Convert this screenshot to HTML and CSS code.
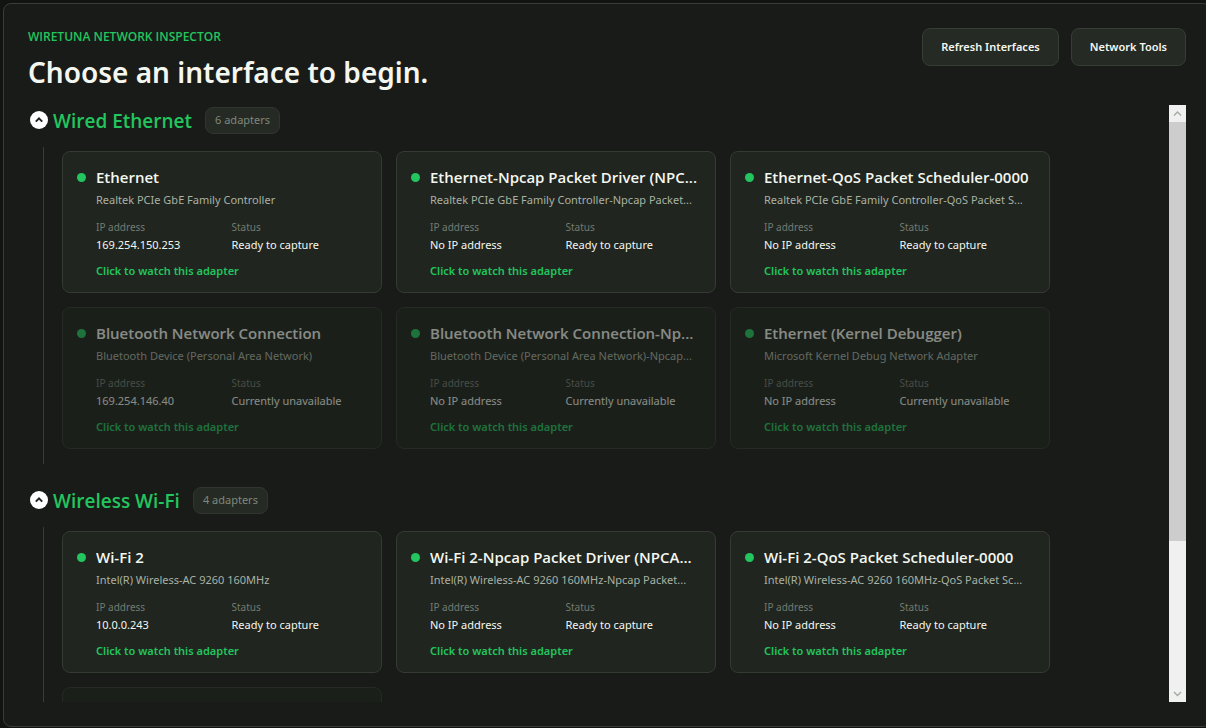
FILE: index.html
```html
<!DOCTYPE html>
<html lang="en">

<head>
    <meta charset="utf-8">
    <title>WireTuna</title>
    <link rel="stylesheet" href="styles.css">
</head>

<body>

    <main class="panel">

        <header class="top">
            <div>
                <p class="eyebrow">WIRETUNA NETWORK INSPECTOR</p>
                <h1>Choose an interface to begin.</h1>
            </div>
            <div class="actions">
                <button class="btn" type="button">Refresh Interfaces</button>
                <button class="btn" type="button">Network Tools</button>
            </div>
        </header>

        <div class="scroller">
            <div class="groups">

                <details class="group" open>
                    <summary>
                        <svg class="toggle" viewBox="0 0 18 18"><circle cx="9" cy="9" r="9" fill="#fff"/><path d="M5.8 10.6 9 7.4l3.2 3.2" fill="none" stroke="#222" stroke-width="2"/></svg>
                        <span class="group-name">Wired Ethernet</span>
                        <span class="badge">6 adapters</span>
                    </summary>
                    <div class="cards">
                        <button class="card" type="button">
                            <span class="dot"></span>
                            <span class="info">
                                <span class="name">Ethernet</span>
                                <span class="desc">Realtek PCIe GbE Family Controller</span>
                                <span class="facts">
                                    <span class="label">IP address</span><span class="label">Status</span>
                                    <span class="value">169.254.150.253</span><span class="value">Ready to capture</span>
                                </span>
                                <span class="watch">Click to watch this adapter</span>
                            </span>
                        </button>
                        <button class="card" type="button">
                            <span class="dot"></span>
                            <span class="info">
                                <span class="name">Ethernet-Npcap Packet Driver (NPC...</span>
                                <span class="desc">Realtek PCIe GbE Family Controller-Npcap Packet...</span>
                                <span class="facts">
                                    <span class="label">IP address</span><span class="label">Status</span>
                                    <span class="value">No IP address</span><span class="value">Ready to capture</span>
                                </span>
                                <span class="watch">Click to watch this adapter</span>
                            </span>
                        </button>
                        <button class="card" type="button">
                            <span class="dot"></span>
                            <span class="info">
                                <span class="name">Ethernet-QoS Packet Scheduler-0000</span>
                                <span class="desc">Realtek PCIe GbE Family Controller-QoS Packet S...</span>
                                <span class="facts">
                                    <span class="label">IP address</span><span class="label">Status</span>
                                    <span class="value">No IP address</span><span class="value">Ready to capture</span>
                                </span>
                                <span class="watch">Click to watch this adapter</span>
                            </span>
                        </button>
                        <button class="card" type="button" disabled>
                            <span class="dot"></span>
                            <span class="info">
                                <span class="name">Bluetooth Network Connection</span>
                                <span class="desc">Bluetooth Device (Personal Area Network)</span>
                                <span class="facts">
                                    <span class="label">IP address</span><span class="label">Status</span>
                                    <span class="value">169.254.146.40</span><span class="value">Currently unavailable</span>
                                </span>
                                <span class="watch">Click to watch this adapter</span>
                            </span>
                        </button>
                        <button class="card" type="button" disabled>
                            <span class="dot"></span>
                            <span class="info">
                                <span class="name">Bluetooth Network Connection-Np...</span>
                                <span class="desc">Bluetooth Device (Personal Area Network)-Npcap...</span>
                                <span class="facts">
                                    <span class="label">IP address</span><span class="label">Status</span>
                                    <span class="value">No IP address</span><span class="value">Currently unavailable</span>
                                </span>
                                <span class="watch">Click to watch this adapter</span>
                            </span>
                        </button>
                        <button class="card" type="button" disabled>
                            <span class="dot"></span>
                            <span class="info">
                                <span class="name">Ethernet (Kernel Debugger)</span>
                                <span class="desc">Microsoft Kernel Debug Network Adapter</span>
                                <span class="facts">
                                    <span class="label">IP address</span><span class="label">Status</span>
                                    <span class="value">No IP address</span><span class="value">Currently unavailable</span>
                                </span>
                                <span class="watch">Click to watch this adapter</span>
                            </span>
                        </button>
                    </div>
                </details>

                <details class="group" open>
                    <summary>
                        <svg class="toggle" viewBox="0 0 18 18"><circle cx="9" cy="9" r="9" fill="#fff"/><path d="M5.8 10.6 9 7.4l3.2 3.2" fill="none" stroke="#222" stroke-width="2"/></svg>
                        <span class="group-name">Wireless Wi-Fi</span>
                        <span class="badge">4 adapters</span>
                    </summary>
                    <div class="cards">
                        <button class="card" type="button">
                            <span class="dot"></span>
                            <span class="info">
                                <span class="name">Wi-Fi 2</span>
                                <span class="desc">Intel(R) Wireless-AC 9260 160MHz</span>
                                <span class="facts">
                                    <span class="label">IP address</span><span class="label">Status</span>
                                    <span class="value">10.0.0.243</span><span class="value">Ready to capture</span>
                                </span>
                                <span class="watch">Click to watch this adapter</span>
                            </span>
                        </button>
                        <button class="card" type="button">
                            <span class="dot"></span>
                            <span class="info">
                                <span class="name">Wi-Fi 2-Npcap Packet Driver (NPCA...</span>
                                <span class="desc">Intel(R) Wireless-AC 9260 160MHz-Npcap Packet...</span>
                                <span class="facts">
                                    <span class="label">IP address</span><span class="label">Status</span>
                                    <span class="value">No IP address</span><span class="value">Ready to capture</span>
                                </span>
                                <span class="watch">Click to watch this adapter</span>
                            </span>
                        </button>
                        <button class="card" type="button">
                            <span class="dot"></span>
                            <span class="info">
                                <span class="name">Wi-Fi 2-QoS Packet Scheduler-0000</span>
                                <span class="desc">Intel(R) Wireless-AC 9260 160MHz-QoS Packet Sc...</span>
                                <span class="facts">
                                    <span class="label">IP address</span><span class="label">Status</span>
                                    <span class="value">No IP address</span><span class="value">Ready to capture</span>
                                </span>
                                <span class="watch">Click to watch this adapter</span>
                            </span>
                        </button>
                        <button class="card" type="button" aria-label="Adapter" disabled></button>
                    </div>
                </details>

            </div>

            <div class="scrollbar">
                <button class="arrow" type="button" aria-label="Scroll up">
                    <svg viewBox="0 0 17 17"><path d="M5 10.5 8.5 7l3.5 3.5" fill="none" stroke="#a3aba0" stroke-width="1.4"/></svg>
                </button>
                <div class="track">
                    <div class="thumb"></div>
                </div>
                <button class="arrow" type="button" aria-label="Scroll down">
                    <svg viewBox="0 0 17 17"><path d="M5 7l3.5 3.5L12 7" fill="none" stroke="#a3aba0" stroke-width="1.4"/></svg>
                </button>
            </div>
        </div>

    </main>

</body>

</html>
```
FILE: styles.css
```css
* {
    box-sizing: border-box;
}

body {
    margin: 0;
    height: 100vh;
    overflow: hidden;
    background-color: #121411;
    color: #f4f7f0;
    font-family: "Noto Sans", "Open Sans", sans-serif;
    font-size: 11px;
    line-height: 16px;
}

button {
    font: inherit;
    color: inherit;
}

p,
h1 {
    margin: 0;
}

.panel {
    display: flex;
    flex-direction: column;
    height: calc(100vh - 4px);
    margin: 3px -5px 0 3px;
    padding: 24px;
    background-color: #191b18;
    border: 1px solid #383d36;
    border-radius: 8px;
}

.top {
    display: flex;
    justify-content: space-between;
    align-items: flex-start;
    margin-bottom: 12px;
}

.eyebrow,
.group-name,
.name {
    font-family: "Open Sans", "Noto Sans", sans-serif;
    font-weight: 600;
}

.eyebrow {
    color: #22c55e;
    font-size: 12px;
    line-height: 18px;
}

h1 {
    margin-top: 6px;
    font-size: 28px;
    font-weight: 600;
    line-height: 41px;
}

.actions {
    display: flex;
    gap: 12px;
}

.btn {
    height: 38px;
    padding: 0 18px;
    background-color: #252a24;
    border: 1px solid #353d34;
    border-radius: 8px;
    font-weight: 600;
}

.scroller {
    display: flex;
    flex: 1;
    min-height: 0;
}

.groups {
    flex: 1;
    overflow: hidden;
}

/* adapter groups */

.group {
    padding: 2px 0 21px 15px;
}

summary {
    display: flex;
    align-items: flex-start;
    margin: 0 0 13px -13px;
    list-style: none;
    cursor: pointer;
}

.toggle {
    width: 18px;
    height: 18px;
    margin: 4px 5px 0 0;
}

.group-name {
    height: 27px;
    color: #22c55e;
    font-size: 19px;
    line-height: 28px;
}

.badge {
    height: 27px;
    margin-left: 13px;
    padding: 4px 9px;
    background-color: #252a24;
    border: 1px solid #30362f;
    border-radius: 8px;
    color: #7f887b;
}

.cards {
    display: flex;
    flex-wrap: wrap;
    gap: 14px;
    padding: 4px 0 15px 18px;
    border-left: 1px solid #383d36;
}

.card {
    display: flex;
    align-items: flex-start;
    gap: 10px;
    width: 320px;
    height: 142px;
    padding: 14px;
    background-color: #20251f;
    border: 1px solid #343b33;
    border-radius: 8px;
    text-align: left;
    cursor: pointer;
}

.card:disabled {
    background-color: #1b1f1a;
    border-color: #252a24;
    cursor: default;
}

.card:disabled .dot,
.card:disabled .info {
    opacity: 0.5;
}

.dot {
    width: 9px;
    height: 9px;
    margin-top: 7px;
    background-color: #22c55e;
    border-radius: 50%;
}

.info {
    flex: 1;
    min-width: 0;
}

.name,
.desc,
.watch {
    display: block;
    overflow: hidden;
    white-space: nowrap;
    text-overflow: ellipsis;
}

.name {
    font-size: 15px;
    line-height: 22px;
}

.desc {
    margin-top: 4px;
    color: #a9b2a5;
}

.facts {
    display: grid;
    grid-template-columns: 1fr 1fr;
    row-gap: 2px;
    margin: 11px 0 10px;
}

.label {
    color: #737b70;
    font-size: 10px;
}

.watch {
    color: #22c55e;
    font-weight: 600;
}

/* scrollbar */

.scrollbar {
    display: flex;
    flex-direction: column;
    width: 17px;
    background-color: #f0f0f0;
}

.arrow {
    height: 17px;
    padding: 0;
    background: none;
    border: 0;
}

.arrow svg {
    display: block;
}

.track {
    display: flex;
    flex: 1;
    flex-direction: column;
}

.track::after {
    content: "";
    flex: 10;
}

.thumb {
    flex: 29;
    background-color: #cdcdcd;
}
```
